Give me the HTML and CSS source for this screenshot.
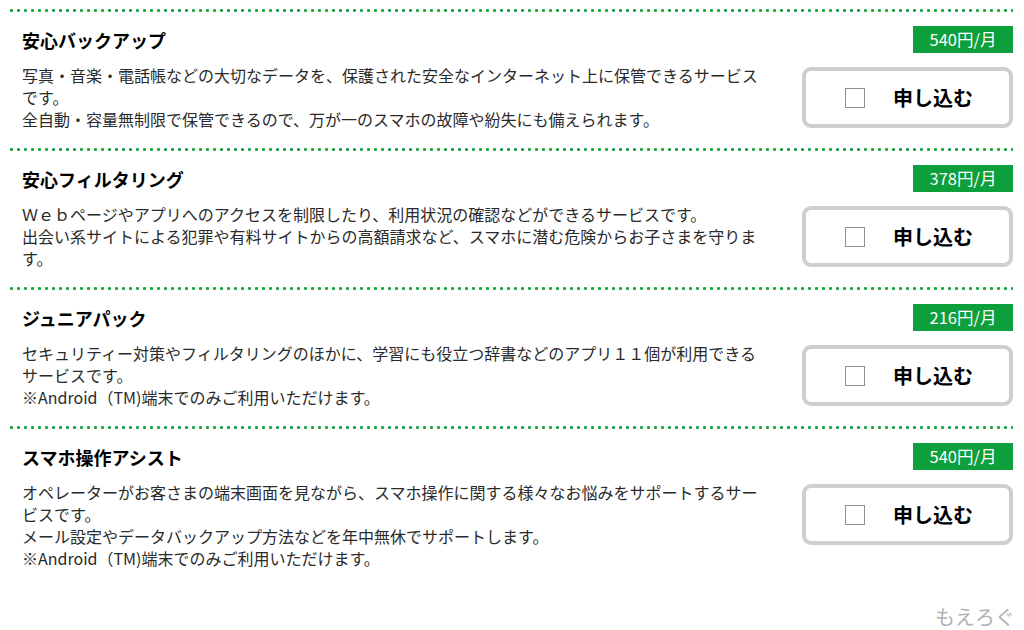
FILE: index.html
```html
<!DOCTYPE html>
<html lang="ja">
<head>
<meta charset="utf-8">
<link rel="stylesheet" href="styles.css">
</head>
<body>
<div class="page">
  <div class="row">
    <div class="info">
      <h2 class="title">安心バックアップ</h2>
      <p class="desc">写真・音楽・電話帳などの大切なデータを、保護された安全なインターネット上に保管できるサービスです。<br>全自動・容量無制限で保管できるので、万が一のスマホの故障や紛失にも備えられます。</p>
    </div>
    <div class="side">
      <span class="price">540円/月</span>
      <label class="apply"><span class="box"></span><span class="apply-text">申し込む</span></label>
    </div>
  </div>
  <div class="row">
    <div class="info">
      <h2 class="title">安心フィルタリング</h2>
      <p class="desc">Ｗｅｂページやアプリへのアクセスを制限したり、利用状況の確認などができるサービスです。<br>出会い系サイトによる犯罪や有料サイトからの高額請求など、スマホに潜む危険からお子さまを守ります。</p>
    </div>
    <div class="side">
      <span class="price">378円/月</span>
      <label class="apply"><span class="box"></span><span class="apply-text">申し込む</span></label>
    </div>
  </div>
  <div class="row">
    <div class="info">
      <h2 class="title">ジュニアパック</h2>
      <p class="desc">セキュリティー対策やフィルタリングのほかに、学習にも役立つ辞書などのアプリ１１個が利用できるサービスです。<br>※Android（TM)端末でのみご利用いただけます。</p>
    </div>
    <div class="side">
      <span class="price">216円/月</span>
      <label class="apply"><span class="box"></span><span class="apply-text">申し込む</span></label>
    </div>
  </div>
  <div class="row">
    <div class="info">
      <h2 class="title">スマホ操作アシスト</h2>
      <p class="desc">オペレーターがお客さまの端末画面を見ながら、スマホ操作に関する様々なお悩みをサポートするサービスです。<br>メール設定やデータバックアップ方法などを年中無休でサポートします。<br>※Android（TM)端末でのみご利用いただけます。</p>
    </div>
    <div class="side">
      <span class="price">540円/月</span>
      <label class="apply"><span class="box"></span><span class="apply-text">申し込む</span></label>
    </div>
  </div>
</div>
<div class="watermark">もえろぐ</div>
</body>
</html>
```

FILE: styles.css
```css
html, body {
  margin: 0;
  padding: 0;
  background: #fff;
}
body {
  width: 1024px;
  height: 630px;
  position: relative;
  overflow: hidden;
  font-family: "Noto Sans CJK JP", "Noto Sans", sans-serif;
  color: #222;
}
.page {
  padding: 9px 11px 0 10px;
}
.row {
  display: grid;
  grid-template-columns: 791px 212px;
}
.info, .side {
  background-image: radial-gradient(circle at 1.5px 1.5px, #17a63d 1.3px, rgba(23,166,61,0) 1.7px);
  background-size: 7px 3px;
  background-repeat: repeat-x;
  background-position: 0 0;
}
.info {
  padding: 18px 39px 18px 12px;
}
.title {
  margin: 0;
  font-size: 18px;
  line-height: 26px;
  font-weight: bold;
  color: #000;
}
.desc {
  margin: 11px 0 0;
  font-size: 16px;
  line-height: 22px;
  color: #2a2a2a;
}
.side {
  padding-top: 17px;
  display: flex;
  flex-direction: column;
  align-items: flex-end;
}
.price {
  display: block;
  width: 100px;
  height: 27px;
  line-height: 27px;
  background: #0c9f3b;
  color: #fff;
  font-size: 16.5px;
  text-align: center;
}
.apply {
  margin-top: 14px;
  box-sizing: border-box;
  width: 211px;
  height: 61px;
  border: 4px solid #cfcfcf;
  border-radius: 9px;
  background: #fff;
  display: flex;
  align-items: center;
  justify-content: center;
  gap: 28px;
  padding-left: 3px;
}
.box {
  box-sizing: border-box;
  width: 20px;
  height: 20px;
  border: 1.5px solid #8f8f8f;
  background: #fff;
}
.apply-text {
  font-size: 20px;
  font-weight: bold;
  color: #000;
  line-height: 1;
}
.watermark {
  position: absolute;
  right: 9px;
  bottom: 0;
  font-size: 20px;
  line-height: 26px;
  color: #b0b0b0;
}
```
